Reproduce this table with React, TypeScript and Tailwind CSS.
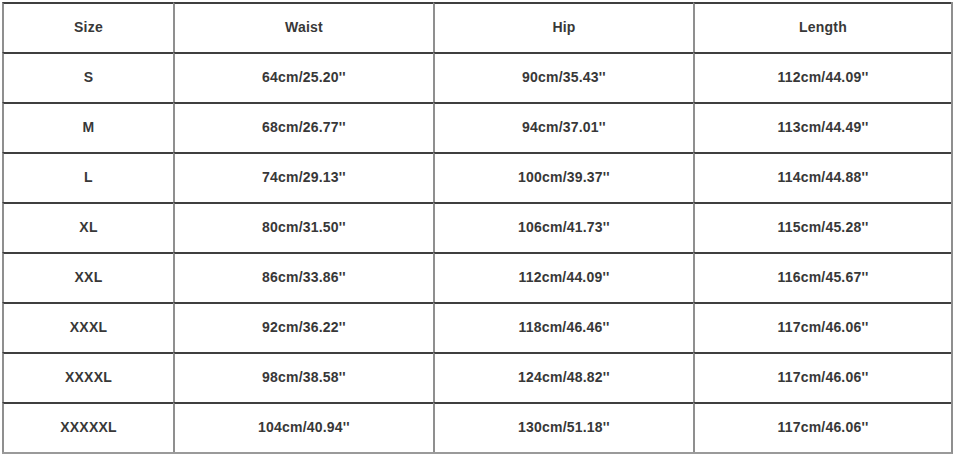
import React from "react";

const header = ["Size", "Waist", "Hip", "Length"];
const rows = [
  ["S", "64cm/25.20''", "90cm/35.43''", "112cm/44.09''"],
  ["M", "68cm/26.77''", "94cm/37.01''", "113cm/44.49''"],
  ["L", "74cm/29.13''", "100cm/39.37''", "114cm/44.88''"],
  ["XL", "80cm/31.50''", "106cm/41.73''", "115cm/45.28''"],
  ["XXL", "86cm/33.86''", "112cm/44.09''", "116cm/45.67''"],
  ["XXXL", "92cm/36.22''", "118cm/46.46''", "117cm/46.06''"],
  ["XXXXL", "98cm/38.58''", "124cm/48.82''", "117cm/46.06''"],
  ["XXXXXL", "104cm/40.94''", "130cm/51.18''", "117cm/46.06''"],
];

export default function App() {
  const all = [header, ...rows];
  return (
    <div className="w-[954px] h-[456px] bg-white pl-[2px] pt-[2px]" style={{ fontFamily: '"Liberation Sans", Arial, sans-serif' }}>
      <div className="grid grid-cols-[171px_260px_260px_258px] w-max border-r-2 border-b-2 border-r-[#8f8f8f] border-b-[#9a9a9a]">
        {all.map((r, i) =>
          r.map((c, j) => (
            <div
              key={i + "-" + j}
              className="h-[50px] pb-[2px] border-l-2 border-t-2 border-l-[#8f8f8f] border-t-[#3f3f3f] flex items-center justify-center text-[14px] font-bold text-[#383838] tracking-[0.2px]"
            >
              {c}
            </div>
          ))
        )}
      </div>
    </div>
  );
}
